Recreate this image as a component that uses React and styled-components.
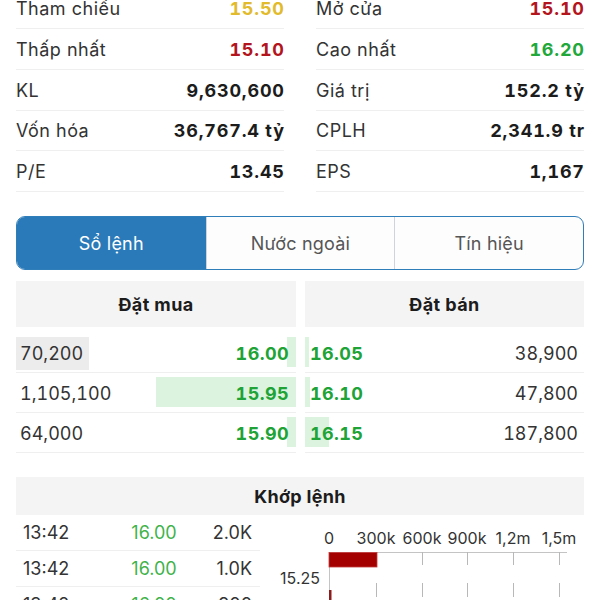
import styled, { createGlobalStyle } from "styled-components";

const GlobalStyle = createGlobalStyle`
  html, body {
    margin: 0;
    padding: 0;
    background: #fff;
  }
  body {
    font-family: Inter, "Noto Sans", "Liberation Sans", sans-serif;
    color: #333;
  }
`;

const Screen = styled.div`
  width: 600px;
  height: 600px;
  overflow: hidden;
  background: #fff;
`;

const StatsGrid = styled.div`
  display: grid;
  grid-template-columns: 1fr 1fr;
  column-gap: 32px;
  padding: 0 16px;
  margin-top: -11.75px;
`;

const StatsColumn = styled.div`
  display: flex;
  flex-direction: column;
`;

const StatRow = styled.div`
  display: flex;
  align-items: center;
  justify-content: space-between;
  height: 40.75px;
  box-sizing: border-box;
  border-bottom: 1px solid #efefef;
  font-size: 18px;
  padding-top: 1px;
`;

const StatLabel = styled.span`
  color: #333;
  letter-spacing: 0.5px;
`;

const StatValue = styled.span`
  font-weight: 700;
  letter-spacing: 0.8px;
  margin-right: -0.8px;
  font-feature-settings: "tnum";
  color: ${(p) => p.color || "#1c1c1c"};
`;

const Tabs = styled.div`
  display: grid;
  grid-template-columns: 1fr 1fr 1fr;
  margin: 24px 16px 0;
  height: 54px;
  box-sizing: border-box;
  border: 1.5px solid #2f7db9;
  border-radius: 9px;
  overflow: hidden;
  background: #fdfdfd;
`;

const Tab = styled.div`
  display: flex;
  align-items: center;
  justify-content: center;
  font-size: 18px;
  letter-spacing: 0.2px;
  color: ${(p) => (p.active ? "#fff" : "#555")};
  background: ${(p) => (p.active ? "#2a7ab9" : "transparent")};
  border-left: ${(p) => (p.first ? "none" : "1px solid #d0d4d8")};
`;

const BookHeader = styled.div`
  display: grid;
  grid-template-columns: 280px 1fr;
  column-gap: 9px;
  margin: 11px 16px 0;
`;

const HeaderCell = styled.div`
  height: 46px;
  display: flex;
  align-items: center;
  justify-content: center;
  background: #f4f4f4;
  font-size: 18px;
  font-weight: 700;
  letter-spacing: 0.4px;
  color: #1c1c1c;
`;

const BookBody = styled.div`
  display: grid;
  grid-template-columns: 280px 1fr;
  column-gap: 9px;
  margin: 6px 16px 0;
`;

const BookSide = styled.div`
  display: flex;
  flex-direction: column;
`;

const BookRow = styled.div`
  position: relative;
  height: 40px;
  box-sizing: border-box;
  border-bottom: 1px solid #efefef;
  display: flex;
  align-items: center;
  justify-content: space-between;
  padding: ${(p) => (p.side === "buy" ? "1px 7px 0 4px" : "1px 6px 0 5px")};
  font-size: 18px;
  font-feature-settings: "tnum";
`;

const VolBar = styled.div`
  position: absolute;
  top: 4px;
  height: 30px;
  background: #dcf3e0;
  ${(p) => (p.side === "buy" ? "right: 0;" : "left: 0;")}
`;

const Qty = styled.span`
  position: relative;
  color: #333;
  ${(p) =>
    p.flash &&
    `
    background: #ececec;
    margin-left: -4px;
    padding: 6px 6px 6px 4px;
  `}
`;

const Price = styled.span`
  position: relative;
  font-weight: 700;
  letter-spacing: 0.4px;
  color: #20a336;
`;

const MatchHeader = styled.div`
  margin: 24px 16px 0;
  height: 38px;
  display: flex;
  align-items: center;
  justify-content: center;
  background: #f4f4f4;
  font-size: 18px;
  font-weight: 700;
  letter-spacing: 0.3px;
  color: #1c1c1c;
`;

const MatchBody = styled.div`
  display: grid;
  grid-template-columns: 244px 1fr;
  margin: 0 16px 0;
`;

const TradeList = styled.div`
  display: flex;
  flex-direction: column;
`;

const TradeRow = styled.div`
  display: flex;
  align-items: center;
  height: 36px;
  box-sizing: border-box;
  border-bottom: 1px solid #efefef;
  font-size: 18px;
  color: #333;
`;

const TradeTime = styled.span`
  width: 90px;
  padding-left: 7px;
  box-sizing: border-box;
`;

const TradePrice = styled.span`
  width: 96px;
  text-align: center;
  color: #3fb34a;
`;

const TradeVol = styled.span`
  flex: 1;
  text-align: right;
  padding-right: 8px;
`;

const Chart = styled.svg`
  display: block;
  font-family: Inter, "Noto Sans", "Liberation Sans", sans-serif;
`;

const leftStats = [
  ["Tham chiếu", "15.50", "#e2bb2c"],
  ["Thấp nhất", "15.10", "#b3151d"],
  ["KL", "9,630,600"],
  ["Vốn hóa", "36,767.4 tỷ"],
  ["P/E", "13.45"],
];

const rightStats = [
  ["Mở cửa", "15.10", "#b3151d"],
  ["Cao nhất", "16.20", "#22a83a"],
  ["Giá trị", "152.2 tỷ"],
  ["CPLH", "2,341.9 tr"],
  ["EPS", "1,167"],
];

const bids = [
  { qty: "70,200", price: "16.00", bar: 9, flash: true },
  { qty: "1,105,100", price: "15.95", bar: 140 },
  { qty: "64,000", price: "15.90", bar: 9 },
];

const asks = [
  { qty: "38,900", price: "16.05", bar: 4 },
  { qty: "47,800", price: "16.10", bar: 5 },
  { qty: "187,800", price: "16.15", bar: 24 },
];

const trades = [
  ["13:42", "16.00", "2.0K"],
  ["13:42", "16.00", "1.0K"],
  ["13:42", "16.00", "900"],
];

const ticks = [
  [329, "0"],
  [376, "300k"],
  [422, "600k"],
  [467, "900k"],
  [513, "1,2m"],
  [559, "1,5m"],
];

const MatchChart = () => (
  <Chart width="324" height="100" viewBox="260 515 324 100">
    {ticks.map(([x, label]) => (
      <text key={label} x={x} y="544" fontSize="16" fill="#333" textAnchor="middle">
        {label}
      </text>
    ))}
    <line x1="329" x2="567" y1="552.5" y2="552.5" stroke="#c4c4c4" strokeWidth="1" />
    <line x1="329.5" x2="329.5" y1="552" y2="615" stroke="#c4c4c4" strokeWidth="1" />
    {ticks.slice(1).map(([x]) => (
      <g key={x}>
        <line x1={x + 0.5} x2={x + 0.5} y1="552" y2="565" stroke="#b8b8b8" strokeWidth="1" />
        <line x1={x + 0.5} x2={x + 0.5} y1="583" y2="597" stroke="#b8b8b8" strokeWidth="1" />
        <line x1={x + 0.5} x2={x + 0.5} y1="614" y2="628" stroke="#b8b8b8" strokeWidth="1" />
      </g>
    ))}
    <rect x="329" y="552.5" width="48" height="14.5" fill="#a40000" stroke="#c23a3a" strokeWidth="0.8" />
    <text x="320" y="584" fontSize="16" fill="#333" textAnchor="end">
      15.25
    </text>
    <rect x="329" y="590" width="2.5" height="20" fill="#8c1c1c" />
  </Chart>
);

const App = () => {
  return (
    <Screen>
      <GlobalStyle />
      <StatsGrid>
        <StatsColumn>
          {leftStats.map(([label, value, color]) => (
            <StatRow key={label}>
              <StatLabel>{label}</StatLabel>
              <StatValue color={color}>{value}</StatValue>
            </StatRow>
          ))}
        </StatsColumn>
        <StatsColumn>
          {rightStats.map(([label, value, color]) => (
            <StatRow key={label}>
              <StatLabel>{label}</StatLabel>
              <StatValue color={color}>{value}</StatValue>
            </StatRow>
          ))}
        </StatsColumn>
      </StatsGrid>

      <Tabs>
        <Tab active first>
          Sổ lệnh
        </Tab>
        <Tab>Nước ngoài</Tab>
        <Tab>Tín hiệu</Tab>
      </Tabs>

      <BookHeader>
        <HeaderCell>Đặt mua</HeaderCell>
        <HeaderCell>Đặt bán</HeaderCell>
      </BookHeader>

      <BookBody>
        <BookSide>
          {bids.map((b) => (
            <BookRow key={b.price} side="buy">
              <VolBar side="buy" style={{ width: b.bar }} />
              <Qty flash={b.flash}>{b.qty}</Qty>
              <Price>{b.price}</Price>
            </BookRow>
          ))}
        </BookSide>
        <BookSide>
          {asks.map((a) => (
            <BookRow key={a.price} side="sell">
              <VolBar side="sell" style={{ width: a.bar }} />
              <Price>{a.price}</Price>
              <Qty>{a.qty}</Qty>
            </BookRow>
          ))}
        </BookSide>
      </BookBody>

      <MatchHeader>Khớp lệnh</MatchHeader>

      <MatchBody>
        <TradeList>
          {trades.map(([time, price, vol], i) => (
            <TradeRow key={i}>
              <TradeTime>{time}</TradeTime>
              <TradePrice>{price}</TradePrice>
              <TradeVol>{vol}</TradeVol>
            </TradeRow>
          ))}
        </TradeList>
        <MatchChart />
      </MatchBody>
    </Screen>
  );
};

export default App;
